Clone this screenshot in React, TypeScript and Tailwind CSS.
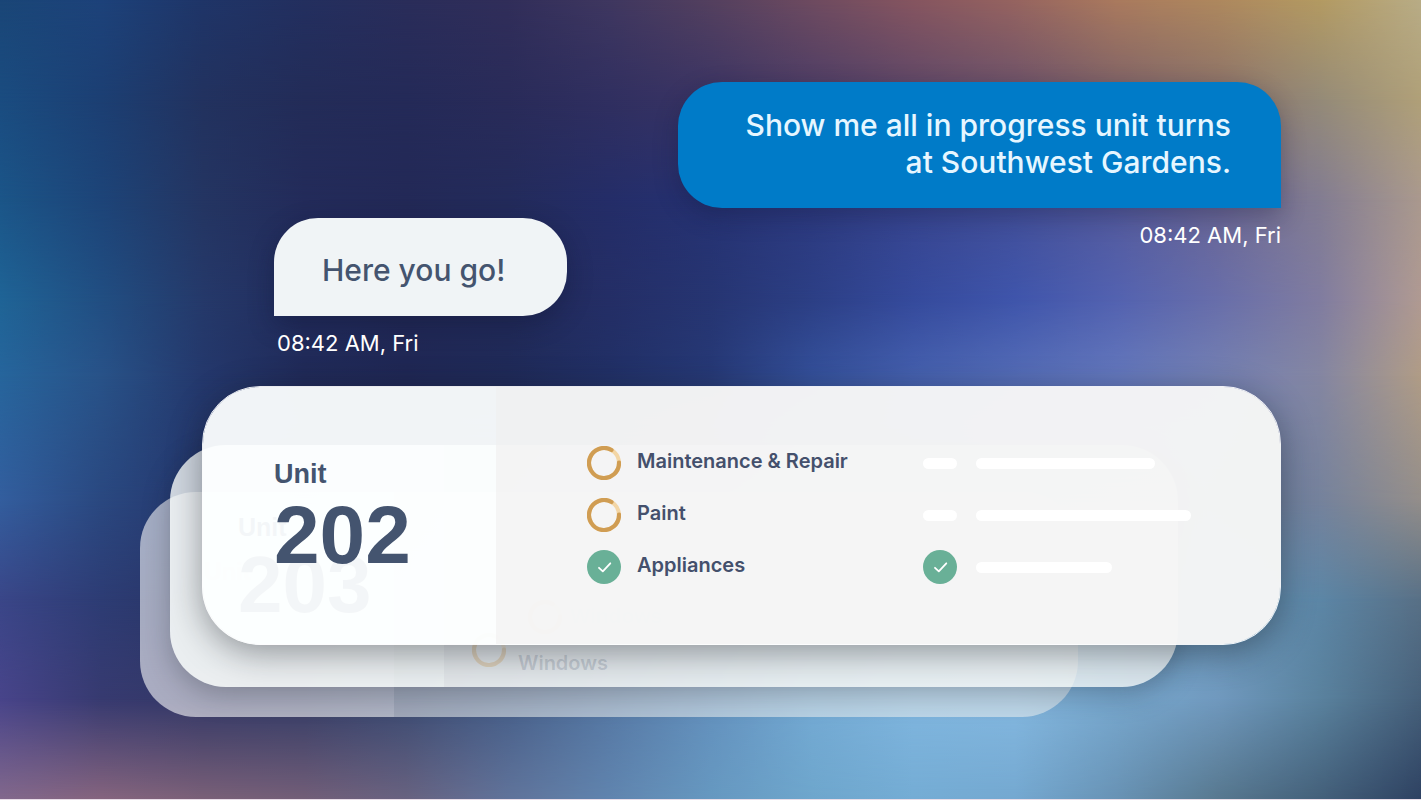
import clsx from "clsx";

// colour mesh: each row runs left to right, and fades into the row below it
const mesh = [
  { y: 0, colors: ["#1a4677", "#1d427a", "#1f3568", "#232f5f", "#2a2d5a", "#312e5a", "#3f3760", "#54405f", "#6e4b60", "#865560", "#966460", "#aa7a5e", "#ae885e", "#b39a62", "#b8ac86"] },
  { y: 12.5, colors: ["#1a4c80", "#1c3f73", "#22325f", "#232c58", "#242a58", "#292b59", "#302f60", "#3a3464", "#4a3c66", "#5a4668", "#68506a", "#7a6068", "#88706a", "#948a78", "#b0a078"] },
  { y: 25, colors: ["#1b5588", "#1d4478", "#243562", "#232b5a", "#232957", "#232b5b", "#242d68", "#263273", "#2d3a80", "#38458f", "#434f98", "#545a9c", "#6a6694", "#827c92", "#aa998e"] },
  { y: 37.5, colors: ["#1f6496", "#214e82", "#25396a", "#222c5c", "#222956", "#222a58", "#242e66", "#263572", "#2c3f85", "#354a9c", "#3f55ab", "#5362b0", "#686eaa", "#807ca0", "#b09a92"] },
  { y: 47, colors: ["#26659c", "#285288", "#24386c", "#202a58", "#1f2754", "#1f2a58", "#213066", "#263976", "#34509a", "#4560ae", "#546cb6", "#6377bc", "#7480b2", "#8486a2", "#b09c86"] },
  { y: 62.5, colors: ["#335e9e", "#2a4880", "#24366c", "#24305f", "#28365f", "#2c3c68", "#34507c", "#44608e", "#5478a4", "#6086b4", "#6a8cbc", "#6d88b4", "#6c84a8", "#75829c", "#948e8a"] },
  { y: 75, colors: ["#3a4688", "#2d3c74", "#283464", "#2a3560", "#303d66", "#3c4f78", "#4a6892", "#5a80ac", "#6c9cc8", "#78acd8", "#7cb0da", "#76a8d0", "#6a96b8", "#5c86a6", "#587086"] },
  { y: 87.5, colors: ["#48448a", "#373a70", "#333866", "#343c66", "#3a4a72", "#465e88", "#5577a3", "#6390bd", "#74aad4", "#80b6df", "#84b8e0", "#78a8ce", "#7099be", "#5a829e", "#46607a"] },
  { y: 100, colors: ["#82688c", "#85647e", "#7a6078", "#725e78", "#686280", "#60739a", "#6084ae", "#6698c0", "#6ea6cc", "#74acd4", "#74a8d0", "#6892b4", "#57788f", "#44607a", "#2e4262"] },
];

const tasks = [
  { name: "Maintenance & Repair", done: false, extraDone: false, bar: "w-[179px]" },
  { name: "Paint", done: false, extraDone: false, bar: "w-[215px]" },
  { name: "Appliances", done: true, extraDone: true, bar: "w-[136px]" },
];

function MeshBackground() {
  return (
    <div aria-hidden="true" className="absolute inset-0 -z-10 overflow-hidden">
      {mesh.map((row, i) => {
        const mask =
          i === 0
            ? undefined
            : `linear-gradient(to bottom, transparent ${mesh[i - 1].y}%, black ${row.y}%)`;
        return (
          <div
            key={row.y}
            className="absolute inset-0"
            style={{
              backgroundImage: `linear-gradient(to right, ${row.colors.join(", ")})`,
              maskImage: mask,
            }}
          />
        );
      })}
    </div>
  );
}

function ProgressRing() {
  return (
    <svg viewBox="0 0 34 34" className="size-[34px] shrink-0" role="img" aria-label="In progress">
      <circle cx="17" cy="17" r="15" fill="none" stroke="#f3d6a6" strokeWidth="4" />
      <path
        d="M32 16.5 A15 15 0 1 1 24.5 4"
        fill="none"
        stroke="#d09d53"
        strokeWidth="4.2"
        strokeLinecap="round"
      />
    </svg>
  );
}

function DoneBadge() {
  return (
    <svg viewBox="0 0 34 34" className="size-[34px] shrink-0" role="img" aria-label="Done">
      <circle cx="17" cy="17" r="17" fill="#69b097" />
      <path
        d="M12 17.8 L15.8 21.4 L23.3 13.3"
        fill="none"
        stroke="#fff"
        strokeWidth="1.8"
        strokeLinecap="round"
        strokeLinejoin="round"
      />
    </svg>
  );
}

function Messages() {
  return (
    <section className="flex items-start justify-between">
      <div className="ml-[134px] mt-[136px]">
        <p className="rounded-[44px] rounded-bl-none bg-[#f0f4f6] pt-[33px] pr-[62px] pb-[27px] pl-12 text-[30px] leading-[38px] font-medium text-[#44546f] shadow-[0_8px_24px_rgba(15,20,50,0.35)]">
          Here you go!
        </p>
        <time className="mt-3 ml-[3px] block text-[22px] leading-[30px] text-white">
          08:42 AM, Fri
        </time>
      </div>
      <div className="text-right">
        <p className="rounded-[44px] rounded-br-none bg-[#007bc8] pt-[25px] pr-[50px] pb-[27px] pl-[68px] text-[30px] leading-[37px] font-medium text-[#e6f6ff] shadow-[0_8px_24px_rgba(15,20,50,0.3)]">
          Show me all in progress unit turns
          <br />
          at Southwest Gardens.
        </p>
        <time className="mt-3 block text-[22px] leading-[30px] text-white">08:42 AM, Fri</time>
      </div>
    </section>
  );
}

function UnitLabel({ number, small }: { number: string; small?: boolean }) {
  return (
    <h2 className="font-['Liberation_Sans',Arial,sans-serif] font-bold text-[#44546f]">
      <span className={clsx("block", small ? "text-[25px] leading-8" : "text-[27px] leading-8")}>
        Unit
      </span>
      <span className={clsx("block", small ? "text-[80px] leading-[84px]" : "text-[82px] leading-[90px]")}>
        {number}
      </span>
    </h2>
  );
}

function UnitCards() {
  return (
    <section className="mt-7 grid">
      {/* Back card */}
      <div
        aria-hidden="true"
        className="col-start-1 row-start-1 mt-[106px] mr-[203px] flex h-[225px] overflow-hidden rounded-[56px]"
      >
        <div className="w-[254px] bg-white/58 pt-16 pl-16">
          <span className="text-2xl font-semibold text-[#44546f]/60">Unit</span>
        </div>
        <div className="flex flex-1 items-start gap-2 bg-[#eef2f2]/55 pt-[108px] pl-[134px]">
          <span className="opacity-60">
            <ProgressRing />
          </span>
          <span className="font-['Liberation_Sans',Arial,sans-serif] text-[21px] leading-8 font-bold text-[#44546f]/80">
            Windows
          </span>
        </div>
      </div>

      {/* Middle card */}
      <div
        aria-hidden="true"
        className="col-start-1 row-start-1 mt-[59px] mr-[103px] ml-[30px] flex h-[242px] overflow-hidden rounded-[56px] shadow-[0_8px_28px_rgba(20,25,35,0.28)]"
      >
        <div className="w-[274px] bg-[#fbfffd]/80 pt-[66px] pl-[68px]">
          <UnitLabel number="203" small />
        </div>
        <div className="flex flex-1 items-end gap-3 bg-[#f3f6f5]/78 pb-2 pl-7">
          <span className="mb-3 opacity-30">
            <ProgressRing />
          </span>
          <span className="text-xl leading-8 font-semibold text-[#44546f]/20">Windows</span>
        </div>
      </div>

      {/* Front card */}
      <article className="z-10 col-start-1 row-start-1 ml-[62px] flex self-start overflow-hidden rounded-[58px] border border-white/90 shadow-[0_8px_34px_rgba(20,25,30,0.42)]">
        <div className="w-[293px] bg-[#fdffff]/95 pt-[71px] pl-[71px]">
          <UnitLabel number="202" />
        </div>
        <ul className="flex-1 bg-[#f5f5f5]/98 pt-[50px] pb-[51px] pl-[91px]">
          {tasks.map((task) => (
            <li key={task.name} className="flex h-[52px] items-center">
              <div className="flex w-[336px] items-center gap-4">
                {task.done ? <DoneBadge /> : <ProgressRing />}
                <span className="mb-1 text-xl leading-7 font-semibold text-[#44506c]">
                  {task.name}
                </span>
              </div>
              <div className="flex items-center gap-[19px]">
                {task.extraDone ? (
                  <DoneBadge />
                ) : (
                  <span className="h-[11px] w-[34px] rounded-full bg-white" />
                )}
                <span className={clsx("h-[11px] rounded-full bg-white", task.bar)} />
              </div>
            </li>
          ))}
        </ul>
      </article>
    </section>
  );
}

export default function App() {
  return (
    <main className="relative isolate min-h-screen border-b border-[#e9dde8] px-[140px] pt-[82px] font-[Inter,'Liberation_Sans',sans-serif]">
      <MeshBackground />
      <Messages />
      <UnitCards />
    </main>
  );
}
